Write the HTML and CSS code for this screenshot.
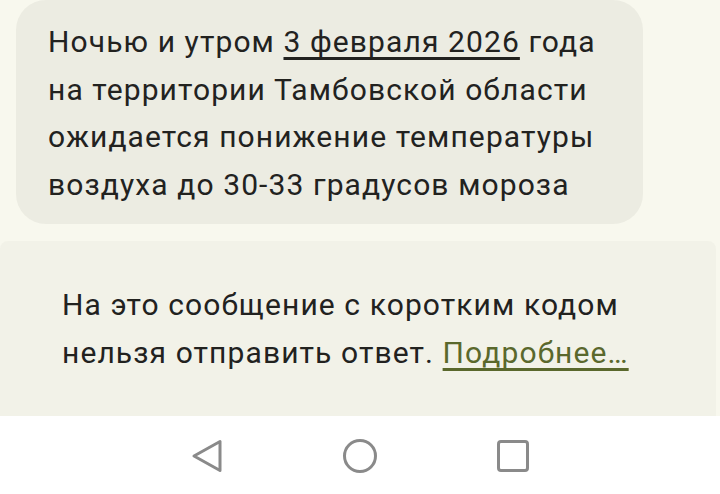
FILE: index.html
```html
<!DOCTYPE html>
<html lang="ru">
<head>
<meta charset="utf-8">
<link rel="stylesheet" href="styles.css">
</head>
<body>
<div class="screen">
  <div class="content">
    <div class="bubble">
      <p class="msg">Ночью и утром <span class="date">3 февраля 2026</span> года<br>на территории Тамбовской области<br>ожидается понижение температуры<br>воздуха до 30-33 градусов мороза</p>
    </div>
    <div class="notice">
      <p class="notice-text">На это сообщение с коротким кодом<br>нельзя отправить ответ. <a class="more" href="#">Подробнее…</a></p>
    </div>
  </div>
  <nav class="navbar">
    <span class="slot"><svg width="34" height="36" viewBox="0 0 34 36"><path d="M30 3.5 L30 32.5 L4 18 Z" fill="none" stroke="#8a8a8a" stroke-width="3" stroke-linejoin="round"/></svg></span>
    <span class="slot"><svg width="36" height="36" viewBox="0 0 36 36"><circle cx="18" cy="18" r="15.5" fill="none" stroke="#8a8a8a" stroke-width="3"/></svg></span>
    <span class="slot"><svg width="34" height="34" viewBox="0 0 34 34"><rect x="2.5" y="2.5" width="29" height="29" rx="2.5" fill="none" stroke="#8a8a8a" stroke-width="3"/></svg></span>
  </nav>
</div>
</body>
</html>
```
FILE: styles.css
```css
* { box-sizing: border-box; }
html, body { margin: 0; padding: 0; }
body {
  width: 720px;
  height: 494px;
  overflow: hidden;
  font-family: Roboto, "Noto Sans", sans-serif;
  color: #22221f;
  background: #f8f8ee;
}
.screen {
  display: flex;
  flex-direction: column;
  height: 494px;
}
.content {
  flex: 1;
  display: flex;
  flex-direction: column;
  gap: 17px;
}
.bubble {
  margin-left: 16px;
  width: 627px;
  height: 224px;
  background: #ecece2;
  border-radius: 30px;
  padding: 18px 0 0 32px;
}
.msg {
  margin: 0;
  font-size: 30px;
  letter-spacing: 1.1px;
  line-height: 47.5px;
  white-space: nowrap;
}
.date {
  text-decoration: underline;
  text-decoration-thickness: 3px;
  text-underline-offset: 5px;
  text-decoration-skip-ink: none;
}
.notice {
  flex: 1;
  margin-right: 4px;
  background: #f2f2e8;
  border-top-left-radius: 8px;
  border-top-right-radius: 8px;
  padding: 40px 0 0 62px;
}
.notice-text {
  margin: 0;
  font-size: 30px;
  letter-spacing: 1.1px;
  line-height: 48px;
  white-space: nowrap;
}
.more {
  color: #5a682c;
  text-decoration: underline;
  text-decoration-thickness: 3px;
  text-underline-offset: 5px;
  text-decoration-skip-ink: none;
}
.navbar {
  height: 78px;
  background: #ffffff;
  display: flex;
  align-items: center;
  justify-content: center;
  gap: 113px;
  padding-top: 2px;
}
.slot {
  width: 40px;
  display: flex;
  justify-content: center;
}
.slot svg { display: block; }
```
